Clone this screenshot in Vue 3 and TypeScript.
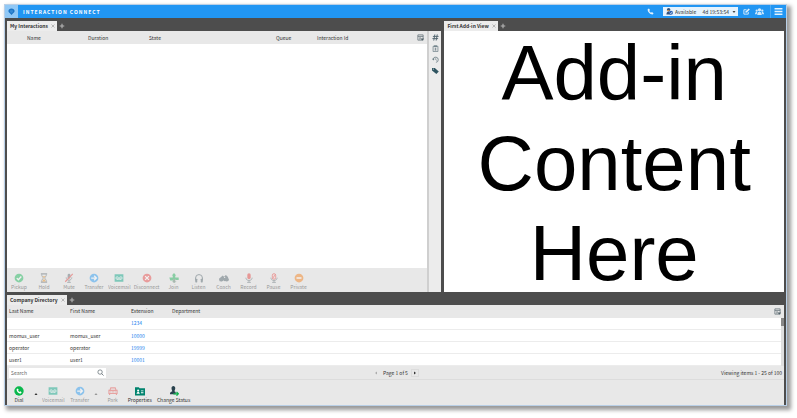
<script setup lang="ts">
import { ref } from 'vue'

interface Action {
  label: string
  icon: string
  enabled?: boolean
  menu?: boolean
}

interface Contact {
  last: string
  first: string
  extension: string
  department: string
}

const interactionColumns: string[] = ['Name', 'Duration', 'State', 'Queue', 'Interaction Id']
const directoryColumns: string[] = ['Last Name', 'First Name', 'Extension', 'Department']

const callActions: Action[] = [
  { label: 'Pickup', icon: 'pickup' },
  { label: 'Hold', icon: 'hold' },
  { label: 'Mute', icon: 'mute' },
  { label: 'Transfer', icon: 'transfer' },
  { label: 'Voicemail', icon: 'voicemail' },
  { label: 'Disconnect', icon: 'disconnect' },
  { label: 'Join', icon: 'join' },
  { label: 'Listen', icon: 'listen' },
  { label: 'Coach', icon: 'coach' },
  { label: 'Record', icon: 'record' },
  { label: 'Pause', icon: 'pause' },
  { label: 'Private', icon: 'private' },
]

const directoryActions: Action[] = [
  { label: 'Dial', icon: 'dial', enabled: true, menu: true },
  { label: 'Voicemail', icon: 'voicemail' },
  { label: 'Transfer', icon: 'transfer', menu: true },
  { label: 'Park', icon: 'park' },
  { label: 'Properties', icon: 'properties', enabled: true },
  { label: 'Change Status', icon: 'status', enabled: true },
]

const sideTools: { label: string; icon: string }[] = [
  { label: 'Dialpad', icon: 'hash' },
  { label: 'Notes', icon: 'notes' },
  { label: 'History', icon: 'history' },
  { label: 'Codes', icon: 'tag' },
]

const contacts: Contact[] = [
  { last: '', first: '', extension: '1234', department: '' },
  { last: 'momus_user', first: 'momus_user', extension: '10000', department: '' },
  { last: 'operator', first: 'operator', extension: '19999', department: '' },
  { last: 'user1', first: 'user1', extension: '10001', department: '' },
]

const search = ref('')
const status = ref('Available')
</script>

<template>
  <svg class="sprite" aria-hidden="true">
    <symbol id="logo" viewBox="0 0 16 16">
      <path d="M8 1C4 1 1 3.600 1 7c0 2.300 1.400 4.200 3.500 5.200L8 16l3.500-3.800C13.600 11.200 15 9.300 15 7c0-3.400-3-6-7-6z" fill="#1b74c5" />
      <path d="M5 5.500h6M4.500 8h7M6 10.500h4" stroke="#5aa6e6" stroke-width="1" />
    </symbol>
    <symbol id="phone" viewBox="0 0 16 16">
      <path d="M4.500 1L1.500 3C1 9 7 15 13 14.800l2-3-3.800-2.500-2 1.700C7.500 10 6 8.500 5.200 6.900l1.600-2.100z" fill="#e3f2fd" />
    </symbol>
    <symbol id="person" viewBox="0 0 16 16">
      <circle cx="6" cy="4" r="4" fill="#34527c" />
      <path d="M1 15c0-5 2-7 5-7s5 2 5 7z" fill="#34527c" />
      <circle cx="11.500" cy="11" r="4.500" fill="#2b62b5" />
      <path d="M9 11l2 2 3-4" fill="none" stroke="#fff" stroke-width="1.500" />
      <path d="M2 6h6" stroke="#f0a040" stroke-width="2" />
    </symbol>
    <symbol id="edit" viewBox="0 0 16 16">
      <path d="M12 9v5H2V4h6" fill="none" stroke="#e3f2fd" stroke-width="2" />
      <path d="M5.500 11l.8-3.300L13 1l2.500 2.500-6.700 6.700z" fill="#e3f2fd" />
    </symbol>
    <symbol id="people" viewBox="0 0 16 16">
      <g fill="#d2eafc">
        <circle cx="8" cy="5" r="3" /><circle cx="3" cy="6.500" r="2" /><circle cx="13" cy="6.500" r="2" />
        <path d="M4 14c0-4 1.500-5.500 4-5.500s4 1.500 4 5.500zM0 13c0-3 1-4 4-4l-1 4zM16 13c0-3-1-4-4-4l1 4z" />
      </g>
    </symbol>
    <symbol id="menu" viewBox="0 0 16 16">
      <path d="M1 3h14M1 8h14M1 13h14" stroke="#e3f2fd" stroke-width="2.500" />
    </symbol>
    <symbol id="columns" viewBox="0 0 16 16">
      <path d="M2 2h12v12H2zM2 5.500h12M5 9h4M5 11.500h3" fill="none" stroke="#66747b" stroke-width="1.800" />
      <path d="M8 10h8l-4 5z" fill="#4d5c64" />
    </symbol>
    <symbol id="hash" viewBox="0 0 16 16">
      <path d="M6.500 1L4 15M12 1L9.500 15M2 5.500h13M1 10.500h13" fill="none" stroke="#53666f" stroke-width="2.200" />
    </symbol>
    <symbol id="notes" viewBox="0 0 16 16">
      <path d="M2.500 3h11v12h-11zM5 1.500h6v2H5z" fill="none" stroke="#667981" stroke-width="1.600" />
      <path d="M6 7h4M6 9.500h4M6 12h4M8 7v5" stroke="#667981" stroke-width="1.300" />
    </symbol>
    <symbol id="history" viewBox="0 0 16 16">
      <path d="M2.500 7A6 6 0 1 1 9 14.500" fill="none" stroke="#667981" stroke-width="1.800" />
      <path d="M0 6l3 4 3-4z" fill="#667981" />
      <path d="M8.500 5v3.500l2.500 1.500" fill="none" stroke="#667981" stroke-width="1.500" />
    </symbol>
    <symbol id="tag" viewBox="0 0 16 16">
      <path d="M0 2h6.500l9 8-5.500 6L0 8z" fill="#2f5561" />
      <circle cx="3" cy="4.800" r="1.200" fill="#ececec" />
    </symbol>
    <symbol id="pickup" viewBox="0 0 16 16">
      <circle cx="8" cy="8" r="7" fill="#14b454" />
      <path d="M4.500 8.200l2.500 2.500 4.700-5" fill="none" stroke="#fff" stroke-width="2.200" />
    </symbol>
    <symbol id="hold" viewBox="0 0 16 16">
      <path d="M3 1.500h10M3 14.500h10" stroke="#59666d" stroke-width="2" />
      <path d="M4.500 2v2.500L7 8l-2.500 3.500V14M11.500 2v2.500L9 8l2.500 3.500V14" fill="none" stroke="#59666d" stroke-width="1.300" />
      <path d="M5.500 5h5L8 8zM8 9l3 4.500H5z" fill="#ee8a10" />
    </symbol>
    <symbol id="mute" viewBox="0 0 16 16">
      <rect x="5.800" y="1" width="4.400" height="8" rx="2.200" fill="#5b6a72" />
      <path d="M3.500 7c0 6 9 6 9 0M8 11.500V15M5 15h6" fill="none" stroke="#5b6a72" stroke-width="1.400" />
      <path d="M2 14L14 1.500" stroke="#e53935" stroke-width="1.800" />
    </symbol>
    <symbol id="transfer" viewBox="0 0 16 16">
      <circle cx="8" cy="8" r="7" fill="#1d96f2" />
      <path d="M3.500 8h8M8.300 4.500L11.800 8l-3.500 3.500" fill="none" stroke="#fff" stroke-width="2" />
    </symbol>
    <symbol id="voicemail" viewBox="0 0 16 16">
      <path d="M1 2h14v12H1z" fill="#00a383" />
      <path d="M5 10h6" stroke="#fff" stroke-width="1.200" />
      <circle cx="5" cy="8" r="2" fill="none" stroke="#fff" stroke-width="1.200" />
      <circle cx="11" cy="8" r="2" fill="none" stroke="#fff" stroke-width="1.200" />
    </symbol>
    <symbol id="disconnect" viewBox="0 0 16 16">
      <circle cx="8" cy="8" r="7" fill="#e84141" />
      <path d="M5 5l6 6M11 5l-6 6" stroke="#fff" stroke-width="2" />
    </symbol>
    <symbol id="join" viewBox="0 0 16 16">
      <path d="M8 0l3.500 4H10v3h5.500v4H10V9.500H6.500v2.500H2L.5 7H6V4H4.500z" fill="#18ad52" />
      <path d="M6.500 9.500H10v4h2.200L8.200 16l-3.700-2.500h2z" fill="#5b806c" />
    </symbol>
    <symbol id="listen" viewBox="0 0 16 16">
      <path d="M2.500 12V8a5.500 5.500 0 0 1 11 0v4" fill="none" stroke="#4b5d66" stroke-width="1.600" />
      <rect x="2" y="9" width="3.200" height="6" rx="1" fill="#4b5d66" />
      <rect x="10.800" y="9" width="3.200" height="6" rx="1" fill="#4b5d66" />
    </symbol>
    <symbol id="coach" viewBox="0 0 16 16">
      <path d="M0 9l6-5 2 2 3-3 3 3 2 5-2 2-3-1-2 1-3-2-2 2H1z" fill="#4b5d66" />
      <circle cx="4" cy="10.500" r="3" fill="#4b5d66" />
      <circle cx="12" cy="10.500" r="3" fill="#4b5d66" />
      <circle cx="9" cy="7" r="1" fill="#e8e8e8" />
    </symbol>
    <symbol id="record" viewBox="0 0 16 16">
      <rect x="5.300" y="0.500" width="5.400" height="9.500" rx="2.700" fill="#e53935" />
      <path d="M3 7.500c0 6 10 6 10 0M8 12v3M5 15h6" fill="none" stroke="#5b6a72" stroke-width="1.400" />
    </symbol>
    <symbol id="pause" viewBox="0 0 16 16">
      <rect x="5.300" y="1" width="5.400" height="9" rx="2.700" fill="#f8d5d5" stroke="#e53935" stroke-width="1.400" />
      <path d="M5.500 9l5-7" stroke="#e53935" stroke-width="1.400" />
      <path d="M3 7.500c0 6 10 6 10 0M8 12v3M5 15h6" fill="none" stroke="#5b6a72" stroke-width="1.400" />
    </symbol>
    <symbol id="private" viewBox="0 0 16 16">
      <circle cx="8" cy="8" r="7" fill="#f47b11" />
      <path d="M4 8h8" stroke="#fff" stroke-width="2.400" />
    </symbol>
    <symbol id="dial" viewBox="0 0 16 16">
      <circle cx="8" cy="8" r="7.500" fill="#0ab84c" />
      <path d="M6 3.800L4.200 5c-.3 3.500 3.200 7 6.800 6.800l1.200-1.800-2.300-1.500-1.100 1C7.800 9 7 8.200 6.500 7.200l1-1.100z" fill="#fff" />
    </symbol>
    <symbol id="park" viewBox="0 0 16 16">
      <path d="M3 7l1.500-4h7L13 7M1.500 7h13v5h-13zM2.500 12v2.500M13.500 12v2.500" fill="none" stroke="#e5504d" stroke-width="1.800" />
      <path d="M3.500 9.500h2M6.500 9.500h3M10.500 9.500h2" stroke="#e5504d" stroke-width="1.500" />
    </symbol>
    <symbol id="properties" viewBox="0 0 16 16">
      <path d="M0 2h6l1.500 1.500H16V15H0z" fill="#00836e" />
      <circle cx="5" cy="7.300" r="1.700" fill="#fff" />
      <path d="M2.500 12.500c0-4 5-4 5 0zM9.500 7h4v1.500h-4zM9.500 10h4v1.500h-4z" fill="#fff" />
    </symbol>
    <symbol id="status" viewBox="0 0 16 16">
      <path d="M4 3.500C4 1.500 5.200 0 7 0s3 1.500 3 3.500-1.300 4-1.300 5l2 1V13H1.500c0-3 1.300-3.700 3.800-4.500 0-1-1.300-3-1.300-5z" fill="#29424d" />
      <path d="M7 12.500h7.500M12 9.500l3 3-3 3" fill="none" stroke="#10b24d" stroke-width="2" />
    </symbol>
    <symbol id="search" viewBox="0 0 16 16">
      <circle cx="7" cy="7" r="5" fill="none" stroke="#59656b" stroke-width="1.600" />
      <path d="M10.500 10.500L15 15" stroke="#59656b" stroke-width="1.800" />
    </symbol>
    <symbol id="down" viewBox="0 0 8 8"><path d="M1 2h6L4 6z" fill="#444" /></symbol>
    <symbol id="up" viewBox="0 0 8 8"><path d="M1 6h6L4 2z" fill="#333" /></symbol>
    <symbol id="left" viewBox="0 0 8 8"><path d="M6 1v6L2 4z" fill="#aaa" /></symbol>
    <symbol id="right" viewBox="0 0 8 8"><path d="M2 1v6l4-3z" fill="#333" /></symbol>
    <symbol id="plus" viewBox="0 0 8 8"><path d="M4 1v6M1 4h6" stroke="#b5b5b5" stroke-width="1.500" /></symbol>
    <symbol id="close" viewBox="0 0 8 8"><path d="M1 1l6 6M7 1l-6 6" stroke="#999" stroke-width="1.300" /></symbol>
  </svg>

  <div class="window">
    <header class="topbar">
      <div class="brand"><svg class="icon-s"><use href="#logo" /></svg></div>
      <h1>INTERACTION CONNECT</h1>
      <button class="top-btn phone" aria-label="Calls"><svg class="icon-s"><use href="#phone" /></svg></button>
      <div class="status">
        <svg class="icon-s"><use href="#person" /></svg>
        <select v-model="status" aria-label="Status">
          <option>Available</option>
        </select>
        <span class="timer">4d 19:53:54</span>
        <svg class="icon-xs"><use href="#down" /></svg>
      </div>
      <button class="top-btn" aria-label="Edit"><svg class="icon-s"><use href="#edit" /></svg></button>
      <button class="top-btn" aria-label="People"><svg class="icon-m"><use href="#people" /></svg></button>
      <button class="top-btn last" aria-label="Menu"><svg class="icon-m"><use href="#menu" /></svg></button>
    </header>

    <main class="upper">
      <section class="interactions">
        <nav class="tabs">
          <div class="tab">My Interactions<button aria-label="Close tab"><svg class="icon-xs"><use href="#close" /></svg></button></div>
          <button class="add" aria-label="Add view"><svg class="icon-p"><use href="#plus" /></svg></button>
        </nav>
        <div class="pane">
          <div class="list">
            <div class="head">
              <table class="queue">
                <thead><tr><th v-for="c in interactionColumns" :key="c">{{ c }}</th></tr></thead>
              </table>
              <button aria-label="Choose columns"><svg class="icon-s"><use href="#columns" /></svg></button>
            </div>
            <div class="empty"></div>
            <div class="toolbar">
              <button v-for="a in callActions" :key="a.label" class="action" disabled>
                <svg class="icon-l"><use :href="'#' + a.icon" /></svg>
                <span>{{ a.label }}</span>
              </button>
            </div>
          </div>
          <aside class="side">
            <button v-for="t in sideTools" :key="t.icon" :aria-label="t.label">
              <svg class="icon-s"><use :href="'#' + t.icon" /></svg>
            </button>
          </aside>
        </div>
      </section>

      <section class="addin">
        <nav class="tabs">
          <div class="tab">First Add-in View<button aria-label="Close tab"><svg class="icon-xs"><use href="#close" /></svg></button></div>
          <button class="add" aria-label="Add view"><svg class="icon-p"><use href="#plus" /></svg></button>
        </nav>
        <div class="content"><p>Add-in<br />Content<br />Here</p></div>
      </section>
    </main>

    <section class="directory">
      <nav class="tabs">
        <div class="tab">Company Directory<button aria-label="Close tab"><svg class="icon-xs"><use href="#close" /></svg></button></div>
        <button class="add" aria-label="Add view"><svg class="icon-p"><use href="#plus" /></svg></button>
      </nav>
      <div class="grid">
        <table class="people">
          <thead>
            <tr>
              <th v-for="c in directoryColumns" :key="c">{{ c }}</th>
              <th class="picker">
                <button aria-label="Choose columns"><svg class="icon-s"><use href="#columns" /></svg></button>
              </th>
            </tr>
          </thead>
          <tbody>
            <tr v-for="p in contacts" :key="p.extension">
              <td>{{ p.last }}</td>
              <td>{{ p.first }}</td>
              <td><a href="#">{{ p.extension }}</a></td>
              <td colspan="2">{{ p.department }}</td>
            </tr>
          </tbody>
        </table>
        <div class="scroll"><div class="thumb"></div></div>
      </div>
      <div class="footer">
        <label class="search">
          <input v-model="search" type="text" placeholder="Search" aria-label="Search" />
          <svg class="icon-s"><use href="#search" /></svg>
        </label>
        <div class="pager">
          <button disabled aria-label="Previous page"><svg class="icon-xs"><use href="#left" /></svg></button>
          <span>Page 1 of 5</span>
          <button class="next" aria-label="Next page"><svg class="icon-xs"><use href="#right" /></svg></button>
        </div>
        <span class="count">Viewing items 1 - 25 of 100</span>
      </div>
      <div class="toolbar">
        <template v-for="a in directoryActions" :key="a.label">
          <button class="action" :disabled="!a.enabled">
            <svg class="icon-l"><use :href="'#' + a.icon" /></svg>
            <span>{{ a.label }}</span>
          </button>
          <button v-if="a.menu" class="more" :disabled="!a.enabled" :aria-label="a.label + ' options'">
            <svg class="icon-xs"><use href="#up" /></svg>
          </button>
        </template>
      </div>
    </section>
  </div>
</template>

<style>
body {
  background: #fff;
}
#app {
  display: flex;
  height: 100vh;
  box-sizing: border-box;
  padding: 4px 10px 12px 4px;
}
</style>

<style scoped>
* {
  box-sizing: border-box;
}
.sprite {
  display: none;
}
.window {
  flex: 1;
  min-width: 0;
  display: flex;
  flex-direction: column;
  border: 1px solid #b9cfe6;
  background: #4d4d4d;
  box-shadow: 3px 3px 4px 1px #999;
  font: 5px/8px 'Noto Sans CJK SC', 'Noto Sans', sans-serif;
  color: #333;
}
button {
  display: flex;
  align-items: center;
  justify-content: center;
  border: 0;
  padding: 0;
  background: none;
  font: inherit;
  color: inherit;
}
svg {
  display: block;
  flex: none;
}
.icon-xs { width: 4px; height: 4px; }
.icon-p { width: 6px; height: 6px; }
.icon-s { width: 7px; height: 7px; }
.icon-m { width: 9px; height: 9px; }
.icon-l { width: 10px; height: 10px; }

.topbar {
  display: flex;
  align-items: stretch;
  height: 13px;
  background: #2196f3;
}
.brand {
  display: flex;
  align-items: center;
  justify-content: center;
  width: 13px;
  background: #90c8f6;
}
h1 {
  margin: 0 auto 0 5px;
  font-size: 5px;
  font-weight: 700;
  line-height: 13px;
  letter-spacing: 1px;
  color: #fff;
}
.top-btn {
  width: 13px;
}
.phone {
  width: 16px;
  margin-right: 5px;
}
.status {
  display: flex;
  align-items: center;
  gap: 2px;
  width: 75px;
  height: 9px;
  margin: 2px 2px 0 0;
  padding: 0 2px 0 3px;
  background: #e6f3fd;
}
.status select {
  flex: 1;
  min-width: 0;
  height: 8px;
  padding: 0;
  border: 0;
  appearance: none;
  background: none;
  font: inherit;
  color: #333;
}
.timer {
  margin-right: 1px;
}
.last {
  width: 16px;
  margin-left: 4px;
  border-left: 1px solid #4daaf5;
}

.tabs {
  display: flex;
  align-items: flex-end;
  height: 13px;
}
.tab {
  display: flex;
  align-items: center;
  gap: 3px;
  height: 10px;
  padding: 0 2px 0 3px;
  background: #ececec;
  font-weight: 700;
  white-space: nowrap;
}
.add {
  width: 10px;
  height: 10px;
}
.upper {
  flex: 1;
  min-height: 0;
  display: flex;
  gap: 3px;
  padding: 0 2px;
}
.interactions {
  flex: 435;
  min-width: 0;
  display: flex;
  flex-direction: column;
}
.pane {
  flex: 1;
  display: flex;
  background: #ececec;
}
.list {
  flex: 1;
  min-width: 0;
  display: flex;
  flex-direction: column;
  border-right: 2px solid #cfcfcf;
}
.head {
  display: flex;
  padding-right: 3px;
  height: 13px;
  background: #e8e8e8;
}
.empty {
  flex: 1;
  background: #fff;
}
table {
  flex: 1;
  table-layout: fixed;
  border-collapse: collapse;
}
th {
  padding: 0;
  text-align: left;
  font-weight: 400;
}
.queue th:nth-child(1) { width: 81px; padding-left: 20px; }
.queue th:nth-child(2) { width: 61px; }
.queue th:nth-child(3) { width: 127px; }
.queue th:nth-child(4) { width: 41px; }
.side {
  display: flex;
  flex-direction: column;
  gap: 4px;
  width: 12px;
  padding-top: 3px;
}
.side button {
  height: 7px;
}
.toolbar {
  display: flex;
  align-items: flex-start;
  gap: 1px;
  background: #e8e8e8;
  height: 24px;
  padding-top: 5px;
}
.action {
  flex-direction: column;
  min-width: 24px;
  padding: 0 1px;
  white-space: nowrap;
}
.directory .toolbar {
  height: 25px;
  padding-top: 6px;
}
.directory .action {
  padding: 0 2px;
}
.action:disabled,
.more:disabled {
  opacity: 0.45;
}
.more {
  width: 7px;
  height: 16px;
}

.addin {
  flex: 340;
  min-width: 0;
  display: flex;
  flex-direction: column;
}
.content {
  flex: 1;
  min-height: 0;
  display: flex;
  align-items: center;
  justify-content: center;
  padding-top: 4px;
  background: #fff;
}
.content p {
  margin: 0;
  font: 78px/90px 'Liberation Sans', Arial, sans-serif;
  text-align: center;
  color: #000;
}

.directory {
  padding: 0 2px;
}
.grid {
  display: flex;
  background: #fff;
}
.people th {
  height: 13px;
  background: #e8e8e8;
}
.people td {
  height: 12px;
  padding: 0;
  border-bottom: 1px solid #ececec;
}
.people th:first-child,
.people td:first-child {
  width: 63px;
  padding-left: 2px;
}
.people th:nth-child(2) { width: 61px; }
.people th:nth-child(3) { width: 41px; }
.people .picker { width: 7px; }
a {
  color: #2383ee;
  text-decoration: none;
}
.scroll {
  width: 3px;
  border-top: 13px solid #e8e8e8;
  background: #dedede;
}
.thumb {
  height: 8px;
  background: #888;
}
.footer {
  display: grid;
  grid-template-columns: 1fr auto 1fr;
  align-items: center;
  height: 14px;
  padding: 0 2px;
  background: #e8e8e8;
  border-bottom: 1px solid #dcdcdc;
}
.search {
  display: flex;
  align-items: center;
  width: 97px;
  height: 10px;
  padding: 0 2px;
  background: #fff;
}
.search input {
  flex: 1;
  min-width: 0;
  height: 8px;
  border: 0;
  padding: 0;
  background: none;
  font: inherit;
}
.search input::placeholder {
  color: #666;
}
.pager {
  display: flex;
  align-items: center;
  gap: 3px;
}
.pager button {
  width: 8px;
  height: 8px;
}
.next {
  border: 1px solid #dcdcdc;
}
.count {
  text-align: right;
}
</style>
